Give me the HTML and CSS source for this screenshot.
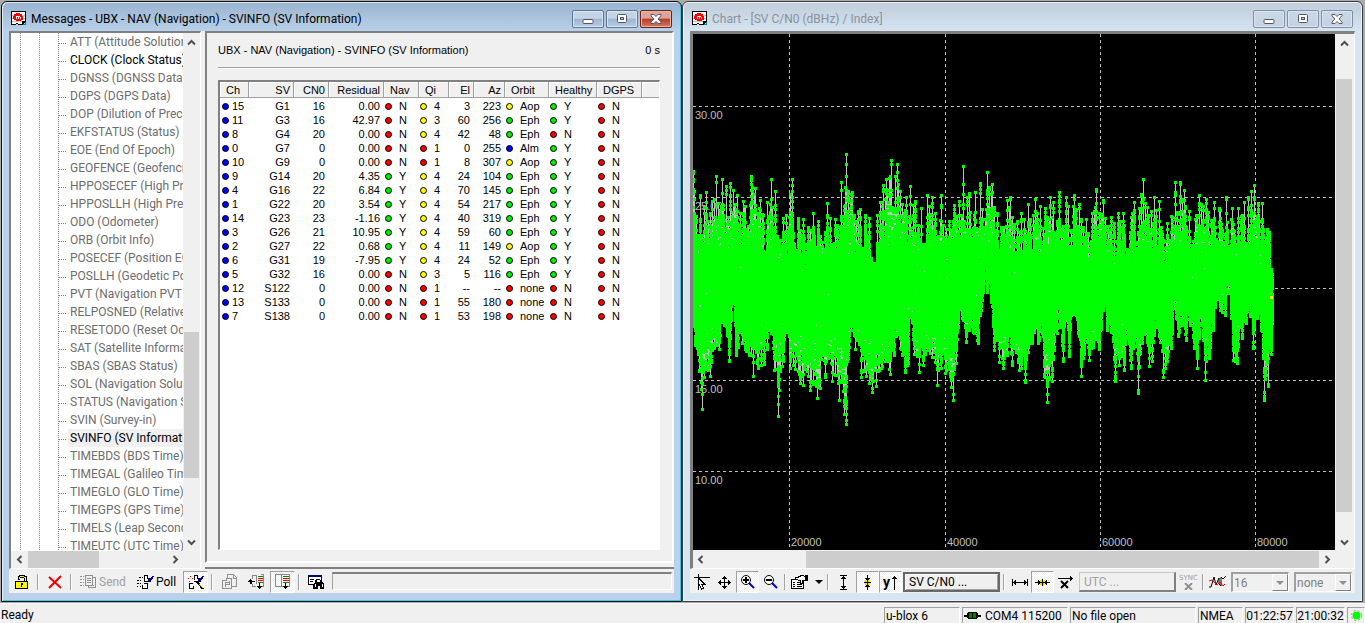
FILE: index.html
```html
<!DOCTYPE html>
<html lang="en">
<head>
<meta charset="utf-8">
<title>u-center</title>
<link rel="stylesheet" href="styles.css">
</head>
<body>
<svg class="defs" aria-hidden="true">
  <symbol id="app" viewBox="0 0 15 15" shape-rendering="crispEdges">
    <path d="M0 0h15v10l-4 4h-3l-2-1-2 1H0z" fill="#000"/>
    <path d="M1 1h13v9h-3v3H8l-2-1-2 1H1z" fill="#fff"/>
    <path d="M1 4h13M1 7h13M1 10h10" stroke="#c0c0c0"/>
    <path d="M5 2h4v1h2v2h1v4h-2v1H5V9H3V8H2V5h1V3h2z" fill="#f00"/>
    <path d="M5.500 5v3M7.500 5v3M9.500 6v2M5 5.500h4" stroke="#fff" fill="none"/>
    <path d="M12 13h2v-2" stroke="#088" fill="none"/>
  </symbol>
  <symbol id="min" viewBox="0 0 12 10"><rect x="1" y="5.500" width="10" height="4" rx="1" fill="#fff" stroke="#535666"/></symbol>
  <symbol id="max" viewBox="0 0 12 10"><rect x="1.500" y=".5" width="9" height="8" rx="1" fill="#fff" stroke="#535666"/><rect x="4.500" y="3.500" width="3" height="2" fill="#b9c9dc" stroke="#535666"/></symbol>
  <symbol id="close" viewBox="0 0 12 10"><path d="M1 .5h3l2 2 2-2h3v1L8 5l3 3v1.500H8l-2-2-2 2H1V8l3-3-3-3z" fill="#fff" stroke="#535666"/></symbol>
  <symbol id="chev" viewBox="0 0 9 7"><path d="M1 5.500l3.500-3.500L8 5.500" fill="none" stroke="#505050" stroke-width="2"/></symbol>
</svg>

<main class="workspace">
  <section class="window active">
    <header class="titlebar">
      <svg class="appicon"><use href="#app"/></svg>
      <h1 class="caption">Messages - UBX - NAV (Navigation) - SVINFO (SV Information)</h1>
      <button class="winbtn" aria-label="Minimize"><svg><use href="#min"/></svg></button>
      <button class="winbtn" aria-label="Restore"><svg><use href="#max"/></svg></button>
      <button class="winbtn close" aria-label="Close"><svg><use href="#close"/></svg></button>
    </header>
    <div class="client">
      <div class="panes">
        <nav class="treepane">
          <div class="treebody">
            <ul class="tree" id="tree"></ul>
            <div class="vscroll">
              <svg class="chev"><use href="#chev"/></svg>
              <span class="space-a"></span><span class="thumb"></span><span class="space-b"></span>
              <svg class="chev down"><use href="#chev"/></svg>
            </div>
          </div>
          <div class="hscroll">
            <svg class="chev left"><use href="#chev"/></svg>
            <span class="thumb"></span><span class="fill"></span>
            <svg class="chev right"><use href="#chev"/></svg>
          </div>
        </nav>
        <div class="viewpane">
          <div class="view">
            <div class="viewhead"><span>UBX - NAV (Navigation) - SVINFO (SV Information)</span><span>0 s</span></div>
            <div class="listview">
              <table class="sv">
                <colgroup><col class="w29"><col class="w45"><col class="w35"><col class="w55"><col class="w35"><col class="w30"><col class="w25"><col class="w31"><col class="w44"><col class="w48"><col class="w45"><col></colgroup>
                <thead><tr><th>Ch</th><th class="r">SV</th><th class="r">CN0</th><th class="r">Residual</th><th>Nav</th><th>Qi</th><th class="r">El</th><th class="r">Az</th><th>Orbit</th><th>Healthy</th><th>DGPS</th><th></th></tr></thead>
                <tbody id="rows"></tbody>
              </table>
            </div>
          </div>
          <div class="edge"></div>
        </div>
      </div>
      <div class="toolbar">
        <button class="tool w26" aria-label="Lock"><svg width="14" height="16" viewBox="0 0 14 16" shape-rendering="crispEdges"><path d="M4 1h6v1h2v6H9V4H5v2H3V2h1z" fill="#000"/><path d="M5 2h4v1h2v5h-1V4H9V3H5v2H4V3h1z" fill="#ff0"/><path d="M.5 7.500h12v7H.5z" fill="#ff0" stroke="#000"/><path d="M6 9h2v2h-1v2H6v-2z" fill="#000"/></svg></button>
        <span class="sep"></span>
        <button class="tool w27" aria-label="Clear"><svg width="16" height="16" viewBox="0 0 16 16"><path d="M2 3l12 11M14 2L2 14" stroke="#f00000" stroke-width="2"/></svg></button>
        <span class="sep"></span>
        <button class="tool text send" disabled><svg width="17" height="16" viewBox="0 0 17 16" shape-rendering="crispEdges"><path d="M0 2.500h2M3 2.500h1M0 5.500h2M3 5.500h1M0 8.500h2M3 8.500h1M0 11.500h2M3 11.500h1M5.500 1.500h7v10h-7zM13 3.500h2.500v10H8.500V12M7 4.500h4M7 6.500h4M7 8.500h4M10 11.500h4" fill="none" stroke="#909090"/></svg>Send</button>
        <button class="tool text poll"><svg width="17" height="16" viewBox="0 0 17 16" shape-rendering="crispEdges"><path d="M2 3.500h2M5 3.500h1M0 6.500h2M3 6.500h1M0 9.500h2M3 9.500h1M0 12.500h1M3 12.500h1" stroke="#000"/><path d="M7.500 1.500h3v3M7.500 1v6h6M7 9.500h3v5H5.500v-4" fill="#fff" stroke="#000"/><path d="M11 4l2 3 3-5" stroke="#008" stroke-width="2" fill="none"/></svg>Poll</button>
        <button class="tool pressed w25" aria-label="Auto poll"><svg width="16" height="16" viewBox="0 0 16 16" shape-rendering="crispEdges"><path d="M0 4.500h1M2 2.500h1M4 4.500h1M1 7.500h1" stroke="#d00000"/><path d="M6.500 6V1.500h3v3M6 7.500h5M4.500 9.500h-3v5h4v-3" fill="#fff" stroke="#000"/><path d="M10 4l2 3 3-5" fill="none" stroke="#008" stroke-width="2"/><path d="M9 8l6 7" stroke="#000" stroke-width="2"/><path d="M11 10l4 4" stroke="#cc0"/></svg></button>
        <span class="sep wide"></span>
        <button class="tool w27" aria-label="Copy" disabled><svg width="17" height="16" viewBox="0 0 17 16" shape-rendering="crispEdges"><path d="M6.500 4V.5h6l3 3v9H11M12.500 1v3h3M1.500 6.500h4v-2h5v10h-9zM4.500 12.500v-4h3M8.500 7v3M5 10.500h4" fill="none" stroke="#909090"/></svg></button>
        <button class="tool w27" aria-label="Insert row"><svg width="17" height="16" viewBox="0 0 17 16" shape-rendering="crispEdges"><path d="M8 1.500H4.500v3M4.500 10v2.500H8M8.500 1v9M13 .5h2.500v12H13" fill="none" stroke="#888"/><path d="M0 7.500h7M1 6.500h2v3M2.500 5v5" fill="none" stroke="#000"/><path d="M10 2.500h5M10 8.500h5" stroke="#080"/><path d="M10 4.500h5M10 6.500h5" stroke="#d00"/><path d="M11.500 9v6M9 12.500h5M10 13.500h3" fill="none" stroke="#000"/></svg></button>
        <button class="tool pressed w25" aria-label="Scroll down"><svg width="16" height="16" viewBox="0 0 16 16" shape-rendering="crispEdges"><path d="M.5.500h14v12H.5zM6.500 0v13" fill="none" stroke="#888"/><path d="M8 2.500h6M8 8.500h6" stroke="#080"/><path d="M8 4.500h6M8 6.500h6" stroke="#d00"/><path d="M10.500 9v6M8 12.500h5M9 13.500h3" fill="none" stroke="#000"/></svg></button>
        <span class="sep wide"></span>
        <button class="tool w27" aria-label="Find"><svg width="17" height="16" viewBox="0 0 17 16" shape-rendering="crispEdges"><path d="M.5 1.500h13v9H.5z" fill="#fff" stroke="#000"/><path d="M0 2h14" stroke="#008" stroke-width="2"/><path d="M2 5.500h4M2 7.500h3M8 5.500h4" stroke="#000"/><path d="M7 6h2v2h3V6h2v2l2 2v5h-4v-3h-2v3H5v-5l2-2z" fill="#000"/><path d="M7.500 10v3M14.500 10v3" stroke="#fff"/></svg></button>
        <input class="field" aria-label="Find text">
      </div>
    </div>
  </section>

  <section class="window">
    <header class="titlebar">
      <svg class="appicon"><use href="#app"/></svg>
      <h2 class="caption">Chart - [SV C/N0 (dBHz) / Index]</h2>
      <button class="winbtn" aria-label="Minimize"><svg><use href="#min"/></svg></button>
      <button class="winbtn" aria-label="Restore"><svg><use href="#max"/></svg></button>
      <button class="winbtn" aria-label="Close"><svg><use href="#close"/></svg></button>
    </header>
    <div class="client">
      <div class="chartpane">
        <div class="chartbody">
          <div class="plot">
            <svg class="grid" id="grid"></svg>
            <canvas class="trace" id="trace" width="642" height="516"></canvas>
          </div>
          <div class="vscroll wide">
            <svg class="chev"><use href="#chev"/></svg>
            <span class="space-a"></span><span class="thumb"></span><span class="space-b"></span>
            <svg class="chev down"><use href="#chev"/></svg>
          </div>
        </div>
        <div class="hscroll wide">
          <svg class="chev left"><use href="#chev"/></svg>
          <span class="fill"></span><span class="thumb"></span>
          <svg class="chev right"><use href="#chev"/></svg>
        </div>
      </div>
      <div class="toolbar">
        <button class="tool w23" aria-label="Cursor"><svg width="16" height="16" viewBox="0 0 16 16" shape-rendering="crispEdges"><path d="M0 3.500h16M4.500 0v16" stroke="#000"/><path d="M4.500 4l6 6h-3l2 4-2 1-2-4-1 1z" fill="#fff" stroke="#000"/></svg></button>
        <button class="tool w23" aria-label="Move"><svg width="13" height="13" viewBox="0 0 13 13" shape-rendering="crispEdges"><path d="M6.500 0v13M0 6.500h13M4 2.500h5M4 10.500h5M2.500 4v5M10.500 4v5M5 1.500h3M5 11.500h3M1.500 5v3M11.500 5v3" stroke="#000"/></svg></button>
        <button class="tool pressed w23" aria-label="Zoom in"><svg width="16" height="16" viewBox="0 0 16 16"><circle cx="6" cy="6" r="4.500" fill="#fff" stroke="#000"/><path d="M6 3v6M3 6h6" stroke="#000" stroke-width="2"/><path d="M9 9l5 5" stroke="#0000c0" stroke-width="2"/></svg></button>
        <button class="tool w23" aria-label="Zoom out"><svg width="16" height="16" viewBox="0 0 16 16"><circle cx="6" cy="6" r="4.500" fill="#fff" stroke="#000"/><path d="M3 6h6" stroke="#000" stroke-width="2"/><path d="M9 9l5 5" stroke="#0000c0" stroke-width="2"/></svg></button>
        <span class="sep"></span>
        <button class="tool props" aria-label="Properties"><svg width="17" height="16" viewBox="0 0 17 16" shape-rendering="crispEdges"><path d="M.5 5.500h12v9H.5z" fill="#fff" stroke="#000"/><path d="M2 8.500h2M6 8.500h5M2 10.500h2M6 10.500h5M2 12.500h2M6 12.500h5" stroke="#000"/><path d="M4.500 5.500v-2h3v-1h2v-1h3l2 2v3h-3v3h-2v-3z" fill="#fff" stroke="#000"/><path d="M14 1h3v6h-2" fill="#000"/></svg><svg width="8" height="4" viewBox="0 0 8 4"><path d="M0 0h8L4 4z"/></svg></button>
        <span class="sep"></span>
        <button class="tool w25" aria-label="Full height"><svg width="9" height="15" viewBox="0 0 9 15" shape-rendering="crispEdges"><path d="M1 .5h7M1 14.500h7M4.500 1v13M3 2.500h3M2 3.500h5M3 12.500h3M2 11.500h5" stroke="#000"/></svg></button>
        <button class="tool pressed w23" aria-label="Fit height"><svg width="9" height="15" viewBox="0 0 9 15" shape-rendering="crispEdges"><path d="M2 5h5v5H2z" fill="#f0e000"/><path d="M4.500 0v15M3 4.500h3M3 10.500h3M2 3.500h5M2 11.500h5M1 7.500h7" stroke="#000"/></svg></button>
        <button class="tool pressed w23 ylab" aria-label="Auto Y">y<svg width="7" height="15" viewBox="0 0 7 15" shape-rendering="crispEdges"><path d="M3.500 1v14M2 2.500h3M1 3.500h5" stroke="#000"/></svg></button>
        <button class="pick default">SV C/N0 ...</button>
        <span class="sep wide"></span>
        <button class="tool w23" aria-label="Full width"><svg width="16" height="9" viewBox="0 0 16 9" shape-rendering="crispEdges"><path d="M.5 1v7M15.500 1v7M1 4.500h14M2.500 3v3M3.500 2v5M13.500 3v3M12.500 2v5" stroke="#000"/></svg></button>
        <button class="tool pressed w23" aria-label="Fit width"><svg width="15" height="9" viewBox="0 0 15 9" shape-rendering="crispEdges"><path d="M5 2h5v5H5z" fill="#f0e000"/><path d="M0 4.500h15M4.500 3v3M3.500 2v5M10.500 3v3M11.500 2v5M7.500 1v7" stroke="#000"/></svg></button>
        <button class="tool w23" aria-label="Auto X"><svg width="16" height="14" viewBox="0 0 16 14"><path d="M0 3.500h15M12.500 1v5M13.500 2v3" stroke="#000" shape-rendering="crispEdges"/><path d="M3 6l7 7M10 6l-7 7" stroke="#000" stroke-width="2"/></svg></button>
        <button class="pick" disabled>UTC ...</button>
        <button class="tool w23 sync" disabled><span>SYNC</span><svg width="9" height="7" viewBox="0 0 9 7"><path d="M1 0l7 7M8 0L1 7" stroke="#909090" stroke-width="2"/></svg></button>
        <span class="sep"></span>
        <button class="tool w23" aria-label="Average"><svg width="17" height="14" viewBox="0 0 17 14"><path d="M0 12h2l3-10 2 8 3-7v6l2 2V2l2 2 3-3" fill="none" stroke="#000"/><path d="M0 6l3-1 5 5 3-3 3 4 2-2" fill="none" stroke="#f00000"/></svg></button>
        <span class="combo"><select aria-label="Samples" disabled><option>16</option></select><span class="drop"><svg width="8" height="4" viewBox="0 0 8 4"><path d="M0 0h8L4 4z" fill="#909090"/></svg></span></span>
        <span class="combo"><select aria-label="Function" disabled><option>none</option></select><span class="drop"><svg width="8" height="4" viewBox="0 0 8 4"><path d="M0 0h8L4 4z" fill="#909090"/></svg></span></span>
      </div>
    </div>
  </section>
</main>

<footer class="status">
  <span class="ready">Ready</span>
  <span class="cell c75">u-blox 6</span>
  <span class="cell c105"><svg width="17" height="8" viewBox="0 0 17 8" shape-rendering="crispEdges"><path d="M0 3.500h17" stroke="#000" stroke-width="2"/><path d="M3 1h11v5H3z" fill="#000"/><path d="M4.500.500h8v6h-8z" fill="#008000" stroke="#000"/><path d="M8.500 0v7" stroke="#000"/></svg>COM4 115200</span>
  <span class="cell c125">No file open</span>
  <span class="cell c45">NMEA</span>
  <span class="cell time">01:22:57</span>
  <span class="cell time">21:00:32</span>
  <span class="cell c18"><svg width="11" height="11" viewBox="0 0 11 11"><circle cx="5.500" cy="5.500" r="5" fill="#fff" stroke="#909090" stroke-dasharray="2 2"/><circle cx="5.500" cy="5.500" r="4" fill="#0f0"/></svg></span>
</footer>
<script src="app.js"></script>
</body>
</html>
```
FILE: styles.css
```css
* { box-sizing: border-box; }
body {
  margin: 0;
  height: 100vh;
  display: flex;
  flex-direction: column;
  overflow: hidden;
  background: #f0f0f0;
  color: #000;
  font: 12px/16px Roboto, "Open Sans", sans-serif;
}
button, input, select { font: inherit; color: inherit; margin: 0; padding: 0; border: 0; border-radius: 0; background: none; }
.defs { display: none; }
svg { display: block; flex: none; }

.workspace {
  flex: 1;
  min-height: 0;
  display: grid;
  grid-template-columns: 1fr 1fr;
  padding: 1px 2px 1px 1px;
  background: #ababab;
}
.window {
  min-width: 0;
  min-height: 0;
  display: flex;
  flex-direction: column;
  padding: 0 7px 8px;
  border: 1px solid #3c3c40;
  border-radius: 6px 6px 0 0;
  background: linear-gradient(#bfcddb, #d7e4f2 30px);
  box-shadow: inset 0 0 0 1px #eef3f8;
}
.window.active {
  border-color: #101010;
  background: linear-gradient(#99b4d1, #b9d1ea 30px);
  box-shadow: inset 1px 1px 0 #dfeaf5, inset -1px -1px 0 #30d0f0;
}
.titlebar { height: 29px; flex: none; display: flex; align-items: center; gap: 2px; padding: 4px 2px 0 2px; }
.appicon { width: 15px; height: 15px; }
.caption { flex: 1; margin: 0 0 0 3px; font-size: 12px; font-weight: 400; white-space: nowrap; overflow: hidden; color: #8b919b; }
.active .caption { color: #000; }
.winbtn {
  width: 32px; height: 18px;
  display: flex; align-items: center; justify-content: center;
  border: 1px solid #7f8ea6;
  border-radius: 2px;
  background: linear-gradient(#cbd8e6, #c3d1e1);
  box-shadow: inset 0 0 0 1px #dbe5f0;
}
.winbtn svg { width: 12px; height: 10px; }
.active .winbtn { border-color: #5f7590; background: linear-gradient(#c3d4e7 45%, #9cb5d0 50%, #b6cde6); }
.active .winbtn.close { border-color: #6b2018; background: linear-gradient(#e0a397 45%, #b83a26 50%, #d47a60); box-shadow: inset 0 0 0 1px #e5b5ab; }

.client { flex: 1; min-height: 0; display: flex; flex-direction: column; background: #f0f0f0; }
.panes { flex: 1; min-height: 0; display: grid; grid-template-columns: 192px 1fr; gap: 4px; }
.treepane { display: flex; flex-direction: column; min-height: 0; border: 2px solid #808080; border-right: 1px solid #fff; border-bottom: 1px solid #fff; }
.treebody { flex: 1; min-height: 0; display: flex; }
.tree { flex: 1; min-width: 0; margin: 0; padding: 0; list-style: none; overflow: hidden; background: #fff; }
.tree li {
  height: 18px;
  padding-left: 57px;
  line-height: 18px;
  color: #6d6d6d;
  white-space: nowrap;
  overflow: hidden;
  background:
    repeating-linear-gradient(#808080 0 1px, transparent 1px 2px) 9px 0 / 1px 18px no-repeat,
    repeating-linear-gradient(#808080 0 1px, transparent 1px 2px) 28px 0 / 1px 18px no-repeat,
    repeating-linear-gradient(#808080 0 1px, transparent 1px 2px) 47px 0 / 1px 18px no-repeat,
    repeating-linear-gradient(90deg, #808080 0 1px, transparent 1px 2px) 48px 10px / 8px 1px no-repeat;
}
.tree li span { display: block; padding-left: 2px; }
.tree .on, .tree .sel { color: #000; }
.tree .sel span { background: #f0f0f0; }

.vscroll { width: 17px; flex: none; display: flex; flex-direction: column; align-items: center; padding: 6px 1px 5px 1px; background: #f0f0f0; }
.hscroll { height: 17px; flex: none; display: flex; align-items: center; padding: 0 19px 0 3px; background: #f0f0f0; }
.chev { width: 9px; height: 7px; margin: 0 1px; }
.chev.down { transform: rotate(180deg); }
.chev.left { transform: rotate(-90deg); }
.chev.right { transform: rotate(90deg); }
.thumb { background: #cdcdcd; }
.fill { flex: 1; }
.vscroll .thumb { width: 100%; flex: 146; }
.vscroll .space-a { flex: 285; }
.vscroll .space-b { flex: 61; }
.vscroll.wide { width: 17px; padding: 6px 0 4px 1px; }
.vscroll.wide .thumb { flex: 433; }
.vscroll.wide .space-a { flex: 32; }
.vscroll.wide .space-b { flex: 27; }
.hscroll .thumb { width: 71px; height: 100%; margin-left: 3px; }
.hscroll.wide { padding: 0 19px 0 2px; }
.hscroll.wide .thumb { flex: 513; width: auto; margin: 0 3px 0 0; }
.hscroll.wide .fill { flex: 100; }

.viewpane { display: flex; flex-direction: column; min-width: 0; min-height: 0; }
.view {
  flex: 1; min-height: 0;
  display: flex; flex-direction: column;
  padding: 0 12px 11px 11px;
  border: 2px solid #808080;
  border-right-color: #fff;
  border-bottom-color: #fff;
  font: 11px/14px "Liberation Sans", Arial, sans-serif;
}
.viewhead { height: 35px; flex: none; display: flex; justify-content: space-between; align-items: center; border-bottom: 1px solid #a0a0a0; box-shadow: 0 1px 0 #fff; }
.edge { height: 2px; margin-top: 4px; background: #808080; }
.listview { flex: 1; min-height: 0; margin-top: 12px; border: 2px solid #808080; border-right: 1px solid #fff; border-bottom: 1px solid #fff; background: #fff; }
.sv { width: 100%; table-layout: fixed; border-collapse: separate; border-spacing: 0; }
.sv th { height: 16px; padding: 0 6px; text-align: left; font-weight: 400; line-height: 14px; background: #f0f0f0; border-right: 1px solid #a0a0a0; border-bottom: 1px solid #a0a0a0; box-shadow: inset 1px 1px 0 #fff; white-space: nowrap; }
.sv th:last-child { border-right: 0; }
.sv td { height: 14px; padding: 0 4px 0 1px; line-height: 14px; white-space: nowrap; }
.sv th.r { padding: 0 3px; text-align: right; }
.sv td.r { text-align: right; }
.sv td:first-child { padding-left: 2px; }
.sv tbody tr:first-child td { padding-top: 1px; height: 15px; }
.sv .val { display: flex; align-items: center; gap: 7px; }
.sv td:first-child .val { gap: 3px; }
.dot { width: 7px; height: 7px; flex: none; border: 1px solid #000; border-radius: 4px; }
.dot.blue { background: #00f; }
.dot.red { background: #f00; }
.dot.green { background: #0e0; }
.dot.yellow { background: #ff0; }
.w29 { width: 29px; } .w30 { width: 30px; } .w45 { width: 45px; } .w35 { width: 35px; } .w55 { width: 55px; }
.w31 { width: 31px; } .w44 { width: 44px; } .w48 { width: 48px; }
.w23 { width: 23px; } .w25 { width: 25px; } .w26 { width: 26px; } .w27 { width: 27px; }

.toolbar { height: 24px; flex: none; display: flex; align-items: center; padding-top: 2px; overflow: hidden; }
.tool { height: 22px; flex: none; display: flex; align-items: center; justify-content: center; }
.tool.text { gap: 2px; justify-content: flex-start; }
.tool:disabled { color: #a0a0a0; }
.tool.pressed { border: 1px solid #a0a0a0; border-right-color: #fff; border-bottom-color: #fff; background: repeating-conic-gradient(#fff 0 25%, #f0f0f0 0 50%) 0 0 / 2px 2px; }
.tool.send { width: 57px; padding-left: 6px; }
.tool.poll { width: 52px; padding-left: 6px; }
.sep { width: 2px; height: 16px; flex: none; margin: 0 2px; border-left: 1px solid #a0a0a0; border-right: 1px solid #fff; }
.sep.wide { margin: 0 3px; }
.field { flex: 1; min-width: 0; height: 18px; margin: 0 2px 2px 2px; border: 1px solid #a0a0a0; border-top: 2px solid #808080; border-bottom-color: #fff; border-right-color: #fff; }
.props { width: 37px; gap: 7px; }
.ylab { font-weight: 700; font-size: 14px; gap: 1px; }
.pick { width: 97px; height: 20px; flex: none; margin: 0 1px 0 2px; padding-left: 4px; text-align: left; border: 1px solid #fff; border-right: 2px solid #808080; border-bottom: 2px solid #808080; }
.pick.default { margin: 0 0 0 1px; border: 2px solid #696969; box-shadow: inset 1px 1px 0 #fff, inset -1px -1px 0 #a0a0a0; }
.pick:disabled { color: #a0a0a0; border-left-color: #c8c8c8; border-top-color: #c8c8c8; }
.sync { flex-direction: column; font: 7px/7px "DejaVu Sans", sans-serif; gap: 1px; }
.combo { flex: 1; min-width: 0; height: 20px; display: flex; margin: 0 3px 0 2px; border: 2px solid #a0a0a0; border-right: 1px solid #fff; border-bottom: 1px solid #fff; }
.combo select { flex: 1; min-width: 0; appearance: none; padding-left: 1px; color: #808080; opacity: 1; }
.drop { width: 16px; flex: none; display: flex; align-items: center; justify-content: center; border: 1px solid #fff; border-right-color: #808080; border-bottom-color: #808080; }

.chartpane { flex: 1; min-height: 0; display: flex; flex-direction: column; padding-right: 2px; border: 3px solid #808080; border-right: 1px solid #fff; border-bottom: 1px solid #fff; }
.chartbody { flex: 1; min-height: 0; display: flex; border-bottom: 1px solid #f0f0f0; }
.plot { flex: 1; min-width: 0; position: relative; overflow: hidden; background: #000; }
.grid { position: absolute; width: 100%; height: 100%; }
.grid line { stroke: #c0c0c0; stroke-dasharray: 3 3; shape-rendering: crispEdges; }
.grid text { fill: #c0c0c0; font: 11px "Liberation Sans", Arial, sans-serif; }
.trace { position: absolute; left: 0; top: 0; }

.status { height: 20px; flex: none; display: flex; gap: 2px; padding-top: 3px; border-top: 1px solid #fff; white-space: nowrap; }
.ready { flex: 1; padding-left: 1px; }
.cell { flex: none; display: flex; align-items: center; gap: 4px; padding-left: 1px; overflow: hidden; border-top: 1px solid #a0a0a0; border-left: 1px solid #a0a0a0; border-right: 1px solid #fff; }
.c75 { width: 76px; } .c105 { width: 106px; } .c125 { width: 126px; } .c45 { width: 45px; } .c18 { width: 18px; justify-content: center; }
.time { width: 49px; padding: 0; justify-content: center; }
```
FILE: app.js
```javascript
const messages = [
  "ATT (Attitude Solution)", "CLOCK (Clock Status)", "DGNSS (DGNSS Data)", "DGPS (DGPS Data)",
  "DOP (Dilution of Precision)", "EKFSTATUS (Status)", "EOE (End Of Epoch)", "GEOFENCE (Geofencing)",
  "HPPOSECEF (High Precision)", "HPPOSLLH (High Precision)", "ODO (Odometer)", "ORB (Orbit Info)",
  "POSECEF (Position ECEF)", "POSLLH (Geodetic Position)", "PVT (Navigation PVT Solution)",
  "RELPOSNED (Relative Position)", "RESETODO (Reset Odometer)", "SAT (Satellite Information)",
  "SBAS (SBAS Status)", "SOL (Navigation Solution)", "STATUS (Navigation Status)", "SVIN (Survey-in)",
  "SVINFO (SV Information)", "TIMEBDS (BDS Time)", "TIMEGAL (Galileo Time)", "TIMEGLO (GLO Time)",
  "TIMEGPS (GPS Time)", "TIMELS (Leap Second)", "TIMEUTC (UTC Time)"
];
document.getElementById("tree").innerHTML = messages.map(m => {
  const cls = m.startsWith("CLOCK") ? "on" : m.startsWith("SVINFO") ? "sel" : "";
  return `<li class="${cls}"><span>${m}</span></li>`;
}).join("");

const satellites = `15 G1 16 0.00 N 4 3 223 Aop Y
11 G3 16 42.97 N 3 60 256 Eph Y
8 G4 20 0.00 N 4 42 48 Eph N
0 G7 0 0.00 N 1 0 255 Alm Y
10 G9 0 0.00 N 1 8 307 Aop Y
9 G14 20 4.35 Y 4 24 104 Eph Y
4 G16 22 6.84 Y 4 70 145 Eph Y
1 G22 20 3.54 Y 4 54 217 Eph Y
14 G23 23 -1.16 Y 4 40 319 Eph Y
3 G26 21 10.95 Y 4 59 60 Eph Y
2 G27 22 0.68 Y 4 11 149 Aop Y
6 G31 19 -7.95 Y 4 24 52 Eph Y
5 G32 16 0.00 N 3 5 116 Eph Y
12 S122 0 0.00 N 1 -- -- none N
13 S133 0 0.00 N 1 55 180 none N
7 S138 0 0.00 N 1 53 198 none N`.split("\n").map(r => r.split(" "));
const orbitColor = { Aop: "yellow", Eph: "green", Alm: "blue", none: "red" };
const num = v => `<td class="r">${v}</td>`;
const flag = (color, v) => `<td><span class="val"><i class="dot ${color}"></i>${v}</span></td>`;
const yesNo = v => flag(v === "Y" ? "green" : "red", v);
document.getElementById("rows").innerHTML = satellites.map(s =>
  "<tr>" + flag("blue", s[0]) + num(s[1]) + num(s[2]) + num(s[3]) + yesNo(s[4]) +
  flag(s[5] === "1" ? "red" : "yellow", s[5]) + num(s[6]) + num(s[7]) +
  flag(orbitColor[s[8]], s[8]) + yesNo(s[9]) + flag("red", "N") + "<td></td></tr>").join("");

const levels = [[72, "30.00"], [163, "25.00"], [254, "20.00"], [346, "15.00"], [437, "10.00"]];
const ticks = [[96, "20000"], [252, "40000"], [407, "60000"], [562, "80000"]];
document.getElementById("grid").innerHTML =
  levels.map(([y, t]) => `<line x1="0" x2="100%" y1="${y + 0.5}" y2="${y + 0.5}"/><text x="2" y="${y + 13}">${t}</text>`).join("") +
  ticks.map(([x, t]) => `<line x1="${x + 0.5}" x2="${x + 0.5}" y1="0" y2="100%"/><text x="${x + 2}" y="512">${t}</text>`).join("");

// Highest and lowest samples along the index axis, as x, y pairs in plot pixels.
const highs = [0,137,1,157,7,161,13,158,19,167,23,142,29,145,33,152,37,149,40,156,44,161,50,167,58,142,62,154,67,166,74,168,78,145,82,157,90,184,93,181,97,160,99,145,105,184,110,185,120,179,125,187,134,169,137,184,142,185,148,148,153,120,159,158,165,177,167,175,172,181,176,184,184,181,187,168,190,151,193,145,198,126,202,142,204,130,207,157,213,163,217,152,222,167,228,174,234,161,239,163,242,179,248,161,256,187,261,171,266,167,270,132,276,159,282,158,287,149,294,138,299,150,304,179,308,193,314,166,317,163,328,179,331,185,335,170,342,165,347,172,352,174,357,163,360,168,366,158,373,163,381,161,386,170,393,185,399,179,403,155,410,166,418,183,425,179,430,179,441,168,448,160,450,145,454,173,461,163,466,167,474,189,482,148,487,148,491,156,496,177,506,161,513,165,521,168,533,163,539,174,545,174,551,168,555,163,558,157,561,151,569,169,574,195,576,198,579,245];
const lows = [0,285,2,311,9,375,17,342,23,311,26,315,29,286,36,327,40,264,43,321,49,309,53,317,60,342,65,334,71,330,74,315,78,299,81,336,85,382,90,327,94,298,97,334,100,331,107,349,110,351,117,356,124,364,127,354,132,343,139,347,142,341,146,366,151,380,153,390,155,324,159,292,162,315,165,299,168,343,173,342,176,349,179,358,183,352,189,332,193,327,197,340,201,321,203,302,207,314,212,338,215,329,217,279,221,320,226,338,230,331,235,316,239,323,244,351,248,334,252,339,258,353,260,366,263,329,265,293,270,286,273,308,276,296,280,298,285,309,288,276,290,258,294,258,298,268,301,316,306,328,310,334,314,321,316,301,319,331,323,318,326,336,332,348,335,318,328,334,332,348,335,313,339,309,342,293,345,309,349,299,351,342,354,368,359,347,364,299,367,293,370,327,373,286,376,322,381,280,385,299,388,342,391,320,396,326,400,313,404,303,406,315,410,276,414,296,418,298,422,347,426,331,431,336,434,304,438,334,442,306,445,359,449,309,452,296,456,332,459,327,461,301,464,293,467,308,470,343,474,327,478,314,481,274,485,302,489,291,493,306,497,291,501,314,504,334,508,279,512,346,516,324,520,296,522,273,527,276,532,281,535,259,538,284,540,326,544,329,547,293,549,304,553,289,556,273,560,314,564,284,568,296,571,366,575,352,578,320,579,289];
const points = a => a.reduce((out, v, i) => (i % 2 ? out[out.length - 1].push(v) : out.push([v]), out), []);
const hi = points(highs), lo = points(lows);
const at = (list, x) => {
  const i = Math.max(1, list.findIndex(p => p[0] >= x));
  const a = list[i - 1], b = list[i];
  return a[1] + (b[1] - a[1]) * (x - a[0]) / (b[0] - a[0]);
};
let seed = 7;
const rnd = () => (seed = (seed * 16807) % 2147483647) / 2147483647;
const ctx = document.getElementById("trace").getContext("2d");
const stem = (x, y0, y1) => { ctx.fillStyle = "#c0c0c0"; ctx.fillRect(x, y0, 1, y1 - y0); };
const mark = (x, y, c = "#0f0") => { ctx.fillStyle = c; ctx.fillRect(x - 1, y - 1, 3, 3); };

const columns = [];
for (let x = 0; x < 579; x++) {
  const top = Math.round(at(hi, x) + 8 + rnd() * 48);
  const low = at(lo, x);
  const bottom = Math.round(low - rnd() * 28 - Math.max(0, low - 335) * 0.3);
  columns.push([x, Math.min(top, 235), bottom]);
}
hi.forEach(([x, y]) => columns.push([x, y, 240]));
lo.forEach(([x, y]) => columns.push([x, 240, y]));
columns.forEach(([x, a, b]) => stem(x, a, b));
columns.forEach(([x, a, b]) => {
  mark(x, a);
  mark(x, b);
  for (let y = a; y < b; y += 2) {
    const depth = Math.min(y - 175, 335 - y);
    const p = 0.16 + Math.max(0, Math.min(depth, 50)) / 80;
    if (rnd() < p) mark(x, y);
  }
});
mark(578, 263, "#ff0");
```
